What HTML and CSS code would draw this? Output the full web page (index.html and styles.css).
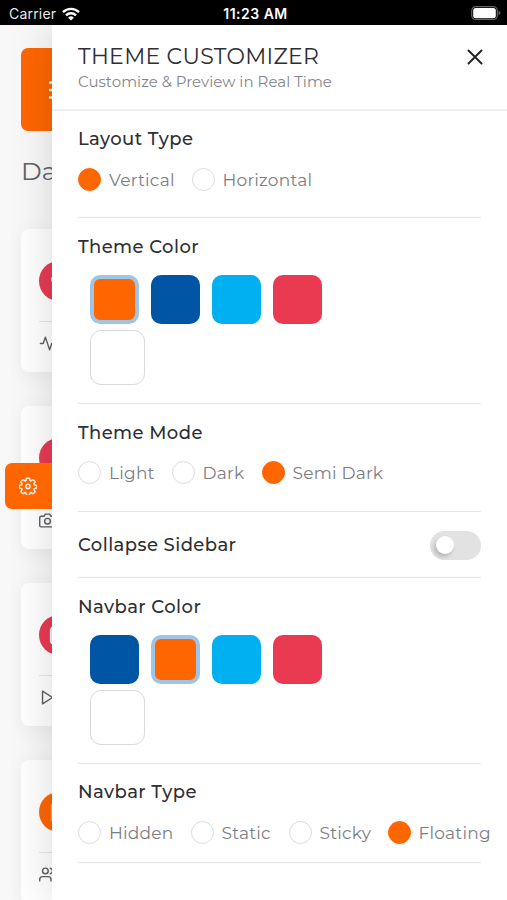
FILE: index.html
```html
<!DOCTYPE html>
<html lang="en">
<head>
<meta charset="utf-8">
<title>Theme Customizer</title>
<link rel="stylesheet" href="styles.css">
</head>
<body>
<header class="status">
  <div class="carrier"><span>Carrier</span>
    <svg width="18" height="14" viewBox="0 0 18 14" fill="none" stroke="#fff" stroke-width="2.4"><path d="M1 5.2a11.4 11.4 0 0 1 16 0"/><path d="M4 8.3a7.2 7.2 0 0 1 10 0"/><path d="M9 13.6 6.1 10.7a4.1 4.1 0 0 1 5.8 0z" fill="#fff" stroke="none"/></svg>
  </div>
  <span class="clock">11:23 AM</span>
  <svg class="battery" width="30" height="15" viewBox="0 0 30 15"><rect x=".7" y=".7" width="25.6" height="12.8" rx="4" fill="none" stroke="#666" stroke-width="1.2"/><rect x="2.2" y="2" width="22.6" height="10.2" rx="2.5" fill="#fff"/><path d="M27.6 4.8q1.8.6 1.8 2.2t-1.8 2.2z" fill="#666"/></svg>
</header>
<div class="stage">
  <main class="page">
    <nav class="navbar"><svg width="24" height="20" viewBox="0 0 24 20" stroke="#fff" stroke-width="2.4" stroke-linecap="round"><path d="M2 2.500h20M2 10h20M2 17.500h20"/></svg></nav>
    <h1 class="page-title">Da</h1>
    <section class="card">
      <div class="dot"><svg viewBox="0 0 24 24" fill="#fff"><path d="M12 21 3.8 13C-1 7 7 1.500 12 7c5-5.500 13 0 8.200 6z"/></svg></div>
      <div class="card-foot"><svg viewBox="0 0 24 24"><path d="M22 12h-4l-3 9L9 3l-3 9H2"/></svg></div>
    </section>
    <section class="card">
      <div class="dot"></div>
      <div class="card-foot"><svg viewBox="0 0 24 24"><path d="M23 19a2 2 0 0 1-2 2H3a2 2 0 0 1-2-2V8a2 2 0 0 1 2-2h4l2-3h6l2 3h4a2 2 0 0 1 2 2z"/><circle cx="12" cy="13" r="4"/></svg></div>
    </section>
    <section class="card">
      <div class="dot"><svg viewBox="0 0 24 24" fill="#f5a3b0" stroke="#fff" stroke-width="2"><rect x="2" y="2" width="20" height="20" rx="4"/></svg></div>
      <div class="card-foot"><svg viewBox="0 0 24 24"><path d="M5 3l14 9-14 9z"/></svg></div>
    </section>
    <section class="card">
      <div class="dot dot-orange"><svg viewBox="0 0 24 24" fill="#ff9a55"><rect x="2" y="2" width="20" height="20"/></svg></div>
      <div class="card-foot"><svg viewBox="0 0 24 24"><path d="M17 21v-2a4 4 0 0 0-4-4H5a4 4 0 0 0-4 4v2"/><circle cx="9" cy="7" r="4"/><path d="M23 21v-2a4 4 0 0 0-3-3.870M16 3.130a4 4 0 0 1 0 7.750"/></svg></div>
    </section>
  </main>

  <button class="gear" aria-label="Settings"><svg width="18" height="18" viewBox="0 0 24 24" fill="none" stroke="#ffeedd" stroke-width="2" stroke-linejoin="round"><path d="M10 1.500h4l.7 3.200 1.400.6 2.700-1.700 2.800 2.800-1.800 2.700.6 1.400 3.200.7v3.600l-3.200.7-.6 1.400 1.800 2.700-2.800 2.800-2.700-1.800-1.400.6-.7 3.200h-4l-.7-3.200-1.400-.6-2.700 1.800-2.800-2.800 1.800-2.700-.6-1.400-3-.7V11.200l3-.7.6-1.400-1.800-2.700 2.800-2.800 2.700 1.700 1.400-.6z"/><circle cx="12" cy="12.500" r="2.800"/></svg></button>

  <aside class="drawer">
    <header class="drawer-head">
      <div>
        <h2>THEME CUSTOMIZER</h2>
        <p>Customize &amp; Preview in Real Time</p>
      </div>
      <svg class="close" width="16" height="16" viewBox="0 0 16 16" stroke="#262626" stroke-width="2" stroke-linecap="round"><path d="M1.500 1.500l13 13M14.500 1.500l-13 13"/></svg>
    </header>
    <div class="groups">
      <section class="group choice">
        <h3>Layout Type</h3>
        <div class="radios two">
          <label class="on"><i></i><span>Vertical</span></label>
          <label><i></i><span>Horizontal</span></label>
        </div>
      </section>
      <section class="group colors">
        <h3>Theme Color</h3>
        <div class="swatches">
          <b class="orange selected"></b><b class="blue"></b><b class="cyan"></b><b class="red"></b><b class="white"></b>
        </div>
      </section>
      <section class="group choice mode">
        <h3>Theme Mode</h3>
        <div class="radios three">
          <label><i></i><span>Light</span></label>
          <label><i></i><span>Dark</span></label>
          <label class="on"><i></i><span>Semi Dark</span></label>
        </div>
      </section>
      <section class="group collapse">
        <h3>Collapse Sidebar</h3>
        <div class="toggle"><i></i></div>
      </section>
      <section class="group colors">
        <h3>Navbar Color</h3>
        <div class="swatches">
          <b class="blue"></b><b class="orange selected"></b><b class="cyan"></b><b class="red"></b><b class="white"></b>
        </div>
      </section>
      <section class="group types">
        <h3>Navbar Type</h3>
        <div class="radios four">
          <label><i></i><span>Hidden</span></label>
          <label><i></i><span>Static</span></label>
          <label><i></i><span>Sticky</span></label>
          <label class="on"><i></i><span>Floating</span></label>
        </div>
      </section>
    </div>
  </aside>
</div>
</body>
</html>
```
FILE: styles.css
```css
* { box-sizing: border-box; margin: 0; padding: 0; }
body {
  width: 507px; height: 900px; overflow: hidden;
  font-family: Montserrat, Inter, "Liberation Sans", sans-serif;
  background: #f8f8f8; color: #2f2f33;
}
svg { display: block; }
.status {
  height: 25px; background: #000; color: #fff;
  display: grid; grid-template-columns: 1fr auto 1fr; align-items: center;
  padding: 2px 7px 0 9px;
  font-family: Inter, sans-serif; font-size: 14px; line-height: 20px;
}
.carrier { display: flex; align-items: center; gap: 6px; color: #e6e6e6; }
.carrier span { letter-spacing: .2px; }
.clock { font-weight: 600; font-size: 14px; letter-spacing: .5px; padding-left: 1px; margin-right: -1px; }
.battery { justify-self: end; margin-right: -1px; }

.stage { position: relative; height: 875px; overflow: hidden; }
.page { padding: 23px 0 0 21px; }
.navbar {
  height: 83px; border-radius: 7px; background: #ff6600;
  display: flex; align-items: center; padding-left: 27px;
}
.page-title { font-size: 25px; font-weight: 400; line-height: 32px; margin: 24px 0 42px; color: #626262; letter-spacing: .2px; }
.card {
  height: 143px; margin-bottom: 34px; border-radius: 8px; background: #fff;
  box-shadow: 0 4px 20px rgba(0,0,0,.05); padding: 32px 0 0 18px;
}
.dot { width: 40px; height: 40px; border-radius: 50%; background: #e93a54; display: flex; align-items: center; justify-content: center; }
.dot svg { width: 21px; height: 21px; }
.dot-orange { background: #ff6600; }
.card-foot { margin-top: 20px; border-top: 1px solid #e6e6e6; padding-top: 13px; }
.card-foot svg { width: 17px; height: 17px; fill: none; stroke: #606065; stroke-width: 2; stroke-linecap: round; stroke-linejoin: round; }

.gear {
  position: absolute; left: 5px; top: 438px; width: 60px; height: 46px; border: 0;
  border-radius: 7px; background: #ff6600; padding-left: 14px; z-index: 5;
  clip-path: inset(0 13px 0 0);
}
.drawer {
  position: absolute; left: 52px; top: 0; width: 455px; height: 875px;
  background: #fff; box-shadow: 0 0 42px rgba(0,0,0,.15); z-index: 4;
}
.drawer-head {
  height: 86px; padding: 18px 24px 0 26px; border-bottom: 2px solid #efefef;
  display: flex; justify-content: space-between; align-items: flex-start;
}
.drawer-head h2 { font-size: 22px; line-height: 28px; font-weight: 400; white-space: nowrap; letter-spacing: .3px; }
.drawer-head p { font-size: 15px; line-height: 20px; margin-top: 1px; color: #85858c; white-space: nowrap; letter-spacing: .03px; }
.close { margin-top: 6px; }
.groups { padding: 0 26px; }
.group { border-bottom: 1px solid #e6e6e6; }
h3 { font-size: 18px; line-height: 24px; font-weight: 500; letter-spacing: .42px; white-space: nowrap; }
.choice { height: 107px; padding-top: 16px; }
.mode { height: 108px; padding-top: 17px; }
.radios { display: grid; margin-top: 17px; }
.two { grid-template-columns: 113.500px 1fr; }
.three { grid-template-columns: 93.500px 90px 1fr; }
.four { grid-template-columns: 112.500px 98px 99px 110px; }
.radios label { display: flex; align-items: center; gap: 8px; height: 23px; font-size: 17px; color: #7d7d84; white-space: nowrap; letter-spacing: .22px; }
.radios span { line-height: 22px; }
.radios i { width: 23px; height: 23px; flex: none; border-radius: 50%; border: 1px solid #dcdcde; background: #fff; }
.radios .on i { background: #ff6600; border-color: #ff6600; }
.mode .radios { margin-top: 16px; }
.colors { height: 186px; padding-top: 17px; }
.swatches { display: flex; flex-wrap: wrap; align-items: flex-start; align-content: flex-start; gap: 6px 12px; padding: 16px 100px 0 12.400px; }
.swatches b { width: 49px; height: 49px; border-radius: 10px; }
.orange { background: #ff6600; }
.blue { background: #0055a5; }
.cyan { background: #00b0f0; }
.red { background: #ea3a51; }
.swatches .white { width: 55px; height: 55px; border: 1px solid #dadada; border-radius: 11px; background: #fff; }
.swatches .selected { border: 4px solid #9ec5e8; }
.collapse { height: 66px; display: flex; align-items: center; justify-content: space-between; }
.toggle { width: 51px; height: 29px; border-radius: 15px; background: #e2e2e2; padding: 5px 6px; margin-top: 2px; }
.toggle i { display: block; width: 18px; height: 18px; border-radius: 50%; background: #fff; box-shadow: -2px 3px 4px rgba(0,0,0,.2); }
.types { height: 99px; padding-top: 16px; }
```
